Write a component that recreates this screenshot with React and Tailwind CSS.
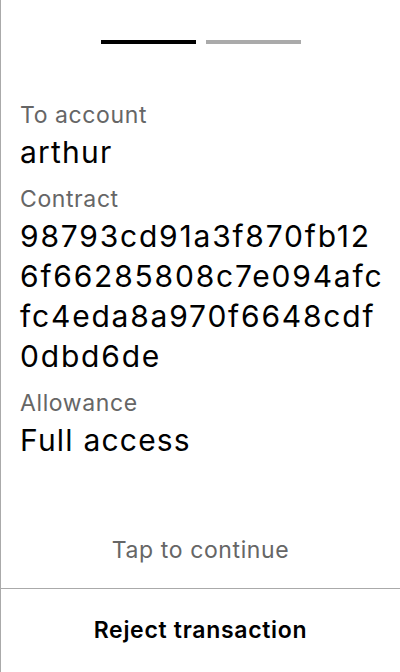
import React from "react";

const contract = "98793cd91a3f870fb126f66285808c7e094afcfc4eda8a970f6648cdf0dbd6de";

// device shows hex in chunks of 19 chars per line
const chunks = contract.match(/.{1,19}/g);

function Label({ children }) {
  return <p className="text-[23px] leading-[34px] tracking-[0.6px] text-[#666666]">{children}</p>;
}

function Value({ children }) {
  return <div className="mb-[10px] text-[30px] leading-[40px] tracking-[1.2px]">{children}</div>;
}

export default function App() {
  return (
    <div className="flex h-[672px] w-[400px] flex-col border-l border-[#aaaaaa] bg-white font-['Inter',sans-serif] text-black">
      <div className="flex justify-center gap-[10px] pt-10">
        <div className="h-1 w-[95px] bg-black" />
        <div className="h-1 w-[95px] bg-[#aaaaaa]" />
      </div>

      <div className="mt-[54px] flex flex-col pl-[19px] pr-5">
        <Label>To account</Label>
        <Value>arthur</Value>

        <Label>Contract</Label>
        <Value>
          {chunks.map((line) => (
            <p key={line} className="tracking-[1.8px]">{line}</p>
          ))}
        </Value>

        <Label>Allowance</Label>
        <Value>Full access</Value>
      </div>

      <div className="flex-1" />

      <p className="pb-[21px] text-center text-[23px] leading-[34px] tracking-[0.6px] text-[#666666]">
        Tap to continue
      </p>

      <button className="h-[84px] w-full border-t border-[#aaaaaa] text-[23px] font-semibold tracking-[0.7px]">
        Reject transaction
      </button>
    </div>
  );
}
